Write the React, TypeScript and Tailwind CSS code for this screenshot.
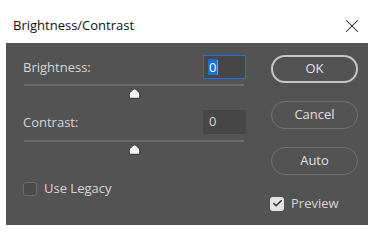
import { Check, X } from "lucide-react";

function Thumb() {
  return (
    <svg width="13" height="11" viewBox="0 0 13 11">
      <path
        d="M6.5 0.8 C7.5 0.8 11.8 4.6 11.8 6 V10.3 H1.2 V6 C1.2 4.6 5.5 0.8 6.5 0.8 Z"
        fill="#f4f4f4"
        stroke="#2e2e2e"
        strokeWidth="1"
      />
    </svg>
  );
}

function Slider() {
  return (
    <>
      <div className="mt-[5px] ml-[1px] h-[2px] w-[220px] bg-[#6c6c6c]" />
      <div className="mt-[2px] ml-[1px] flex h-[11px] w-[220px] justify-center">
        <Thumb />
      </div>
    </>
  );
}

export default function App() {
  return (
    <div className="h-[240px] w-[375px] bg-white font-['Open_Sans',sans-serif]">
      {/* title bar */}
      <div className="flex h-[43px] items-start justify-between pl-[13px] pr-[12px] pt-[16px]">
        <span className="text-[13px] leading-[18px] text-[#111]">Brightness/Contrast</span>
        <X className="mt-[-1px] h-[22px] w-[22px] text-[#222]" strokeWidth={1.1} />
      </div>

      {/* panel */}
      <div className="ml-[6px] flex h-[182px] w-[362px] bg-[#535353] text-[13px] text-[#d6d6d6]">
        <div className="flex w-[240px] flex-col pl-[17px] pt-[12px]">
          <div className="flex h-[24px] items-center justify-between">
            <span className="mt-[1px]">Brightness:</span>
            <div className="flex h-[24px] w-[43px] items-center border border-[#1a73e8] bg-[#474747] pl-[4px]">
              <span className="bg-[#1a6fd8] px-[1px] leading-[16px] text-white">0</span>
              <span className="h-[15px] w-[1px] bg-[#f08a24]" />
            </div>
          </div>
          <Slider />

          <div className="mt-[11px] flex h-[24px] items-center justify-between">
            <span className="mt-[1px]">Contrast:</span>
            <div className="flex h-[24px] w-[43px] items-center border border-[#454545] bg-[#474747] pl-[5px]">
              <span>0</span>
            </div>
          </div>
          <div className="mt-[1px]" />
          <Slider />

          <div className="mt-[24px] flex items-center gap-[7px]">
            <span className="h-[14px] w-[14px] rounded-[3px] border border-[#6e6e6e] bg-[#4a4a4a]" />
            <span>Use Legacy</span>
          </div>
        </div>

        <div className="ml-[25px] flex w-[87px] flex-col pt-[12px]">
          <button className="flex h-[28px] items-center justify-center rounded-full border-2 border-[#c6c6c6] text-[#e2e2e2]">
            OK
          </button>
          <button className="mt-[18px] flex h-[28px] items-center justify-center rounded-full border-[1.5px] border-[#727272] text-[#e0e0e0]">
            Cancel
          </button>
          <button className="mt-[18px] flex h-[28px] items-center justify-center rounded-full border-[1.5px] border-[#727272] text-[#e0e0e0]">
            Auto
          </button>
          <div className="ml-[-1px] mt-[19px] flex items-center gap-[7px]">
            <span className="flex h-[14px] w-[14px] items-center justify-center rounded-[3px] bg-[#e4e4e4]">
              <Check className="h-[11px] w-[11px] text-[#333]" strokeWidth={3.5} />
            </span>
            <span>Preview</span>
          </div>
        </div>
      </div>
    </div>
  );
}
